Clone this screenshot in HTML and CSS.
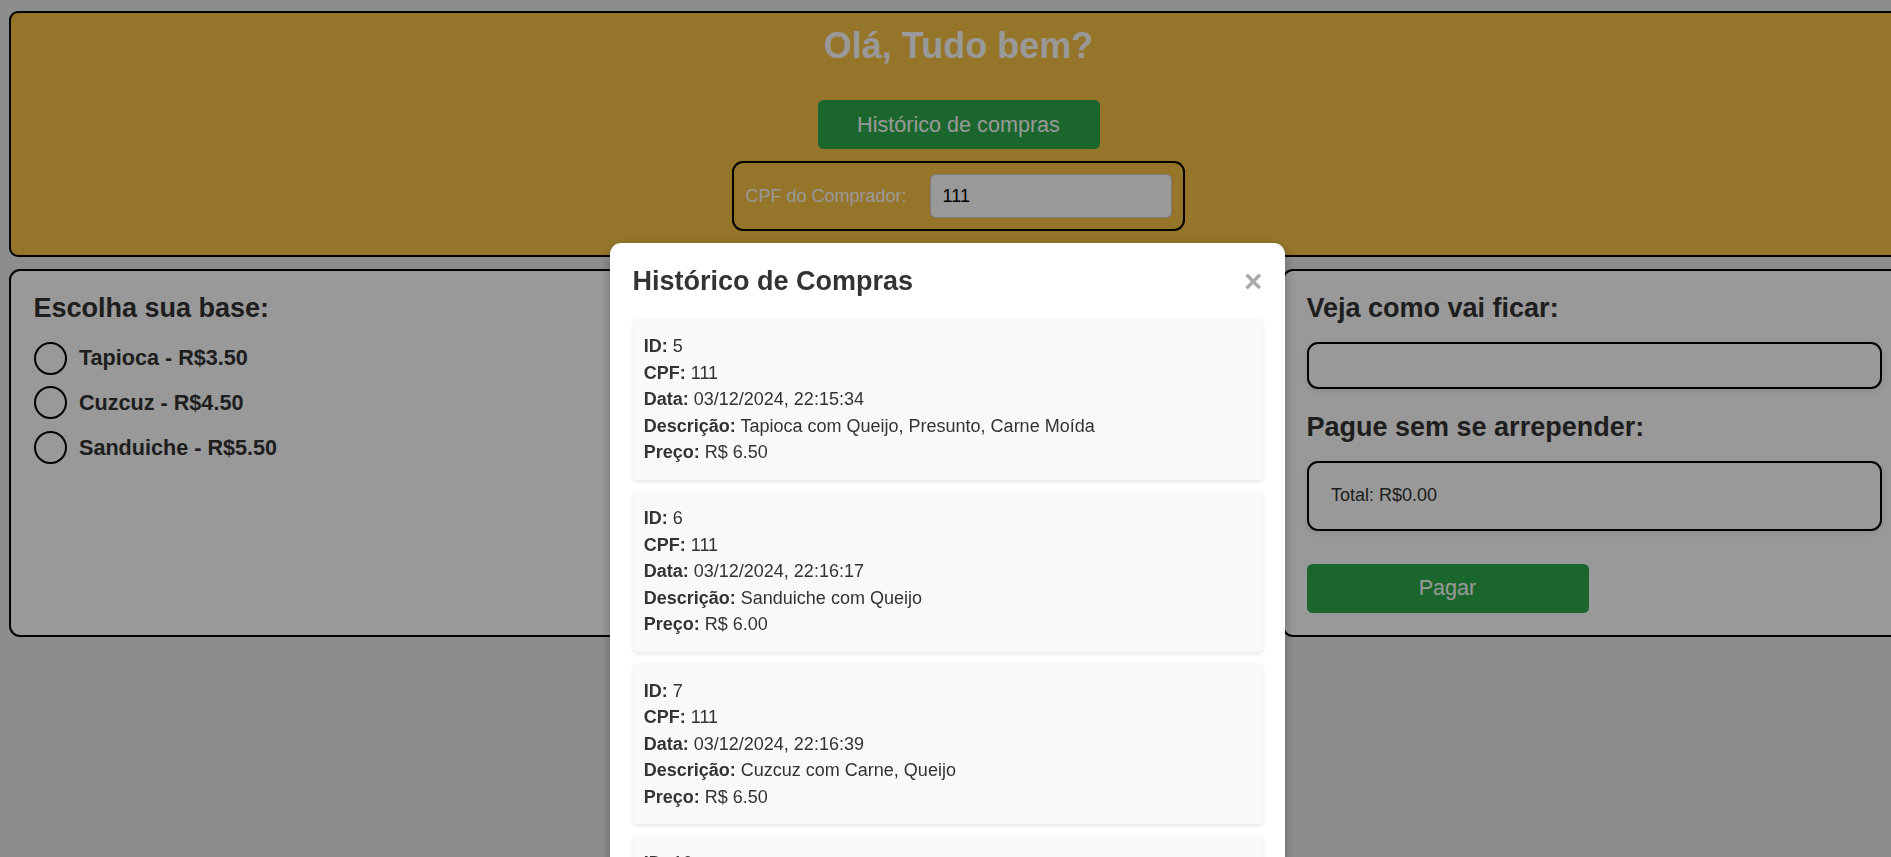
FILE: index.html
```html
<!DOCTYPE html>
<html lang="pt-BR">
<head>
<meta charset="utf-8">
<title>Lanchonete</title>
<link rel="stylesheet" href="styles.css">
</head>
<body>
<div class="page">
  <header class="topo">
    <h1 class="saudacao">Olá, Tudo bem?</h1>
    <button class="btn">Histórico de compras</button>
    <div class="cpf-box">
      <label class="cpf-label" for="cpf">CPF do Comprador:</label>
      <input id="cpf" class="cpf-input" type="text" value="111">
    </div>
  </header>
  <main class="painel-row">
    <section class="painel">
      <h2 class="painel-titulo">Escolha sua base:</h2>
      <label class="opcao"><input type="radio" name="base" class="radio"><span>Tapioca - R$3.50</span></label>
      <label class="opcao"><input type="radio" name="base" class="radio"><span>Cuzcuz - R$4.50</span></label>
      <label class="opcao"><input type="radio" name="base" class="radio"><span>Sanduiche - R$5.50</span></label>
    </section>
    <section class="painel"></section>
    <section class="painel">
      <h2 class="painel-titulo">Veja como vai ficar:</h2>
      <div class="preview"></div>
      <h2 class="painel-titulo">Pague sem se arrepender:</h2>
      <div class="total">Total: R$0.00</div>
      <button class="btn pagar">Pagar</button>
    </section>
  </main>
</div>
<div class="overlay">
  <div class="modal">
    <div class="modal-head">
      <h2 class="modal-titulo">Histórico de Compras</h2>
      <span class="fechar">&times;</span>
    </div>
    <div class="card">
      <p><strong>ID:</strong> 5</p>
      <p><strong>CPF:</strong> 111</p>
      <p><strong>Data:</strong> 03/12/2024, 22:15:34</p>
      <p><strong>Descrição:</strong> Tapioca com Queijo, Presunto, Carne Moída</p>
      <p><strong>Preço:</strong> R$ 6.50</p>
    </div>
    <div class="card">
      <p><strong>ID:</strong> 6</p>
      <p><strong>CPF:</strong> 111</p>
      <p><strong>Data:</strong> 03/12/2024, 22:16:17</p>
      <p><strong>Descrição:</strong> Sanduiche com Queijo</p>
      <p><strong>Preço:</strong> R$ 6.00</p>
    </div>
    <div class="card">
      <p><strong>ID:</strong> 7</p>
      <p><strong>CPF:</strong> 111</p>
      <p><strong>Data:</strong> 03/12/2024, 22:16:39</p>
      <p><strong>Descrição:</strong> Cuzcuz com Carne, Queijo</p>
      <p><strong>Preço:</strong> R$ 6.50</p>
    </div>
    <div class="card">
      <p><strong>ID:</strong> 10</p>
      <p><strong>CPF:</strong> 111</p>
      <p><strong>Data:</strong> 03/12/2024, 22:20:05</p>
      <p><strong>Descrição:</strong> Tapioca com Queijo</p>
      <p><strong>Preço:</strong> R$ 5.50</p>
    </div>
  </div>
</div>
</body>
</html>
```
FILE: styles.css
```css
html, body {
  margin: 0;
  overflow: hidden;
  background: #ececec;
  font-family: "Liberation Sans", Arial, sans-serif;
}

.page {
  padding: 11px 0 0 9px;
}

.topo {
  box-sizing: border-box;
  width: 1899px;
  border: 2px solid #000;
  border-radius: 9px;
  background: #f7c346;
  padding: 11.25px;
  display: flex;
  flex-direction: column;
  align-items: center;
}

.saudacao {
  margin: 1px 0 33px;
  font-size: 36px;
  font-weight: bold;
  color: #fff;
  line-height: normal;
}

.btn {
  display: block;
  width: 282px;
  height: 49px;
  border: none;
  border-radius: 5.5px;
  background: #2dab4b;
  color: #fff;
  font-family: "Liberation Sans", Arial, sans-serif;
  font-size: 21.6px;
  padding: 0;
}

.cpf-box {
  box-sizing: border-box;
  height: 70px;
  margin: 12px 0;
  display: flex;
  align-items: center;
  border: 2px solid #000;
  border-radius: 11px;
  padding: 11.25px;
}

.cpf-label {
  font-size: 18px;
  color: #fff;
  margin-right: 23px;
}

.cpf-input {
  box-sizing: border-box;
  width: 242px;
  height: 44px;
  border: 1px solid #ccc;
  border-radius: 5.5px;
  background: #fff;
  padding: 0 12px;
  font-family: "Liberation Sans", Arial, sans-serif;
  font-size: 18px;
  color: #000;
}

.painel-row {
  display: flex;
  gap: 12.5px;
  margin-top: 12px;
  width: 1897px;
}

.painel {
  flex: 0 0 624px;
  box-sizing: border-box;
  border: 2px solid #000;
  border-radius: 11px;
  background: #fff;
  padding: 22.5px;
}

.painel-titulo {
  margin: 0 0 17.5px;
  font-size: 27px;
  font-weight: bold;
  color: #333;
  line-height: normal;
}

.opcao {
  display: flex;
  align-items: center;
  gap: 12.5px;
  margin-bottom: 11.75px;
  font-size: 21.6px;
  font-weight: bold;
  color: #333;
}

.radio {
  appearance: none;
  -webkit-appearance: none;
  box-sizing: border-box;
  width: 33px;
  height: 33px;
  margin: 0;
  border: 2.5px solid #000;
  border-radius: 50%;
  background: transparent;
}

.preview {
  box-sizing: border-box;
  height: 47px;
  border: 2px solid #000;
  border-radius: 11px;
  margin-bottom: 23.5px;
  box-shadow: 0 2px 6px rgba(0, 0, 0, 0.1);
}

.total {
  border: 2px solid #000;
  border-radius: 11px;
  padding: 22.5px;
  font-size: 18px;
  color: #333;
  box-shadow: 0 2px 6px rgba(0, 0, 0, 0.1);
}

.pagar {
  margin-top: 33px;
}

.overlay {
  position: fixed;
  inset: 0;
  background: rgba(0, 0, 0, 0.4);
  display: flex;
  justify-content: center;
  align-items: flex-start;
  box-sizing: border-box;
  padding: 243px 0 0 4px;
  overflow: hidden;
}

.modal {
  flex: 0 0 675px;
  box-sizing: border-box;
  background: #fff;
  border-radius: 11.25px;
  padding: 22.5px;
  box-shadow: 0 4px 12px rgba(0, 0, 0, 0.3);
}

.modal-head {
  display: flex;
  justify-content: space-between;
  align-items: center;
  margin-bottom: 21.5px;
}

.modal-titulo {
  margin: 0;
  font-size: 27px;
  font-weight: bold;
  color: #333;
  line-height: normal;
}

.fechar {
  font-size: 31.5px;
  font-weight: bold;
  color: #aaa;
  line-height: 1;
}

.card {
  background: #f9f9f9;
  border-radius: 5.5px;
  padding: 11.25px;
  margin-bottom: 11px;
  box-shadow: 0 2px 4px rgba(0, 0, 0, 0.1);
}

.card p {
  margin: 6.25px 0;
  font-size: 18px;
  line-height: 20.25px;
  color: #333;
}
```
